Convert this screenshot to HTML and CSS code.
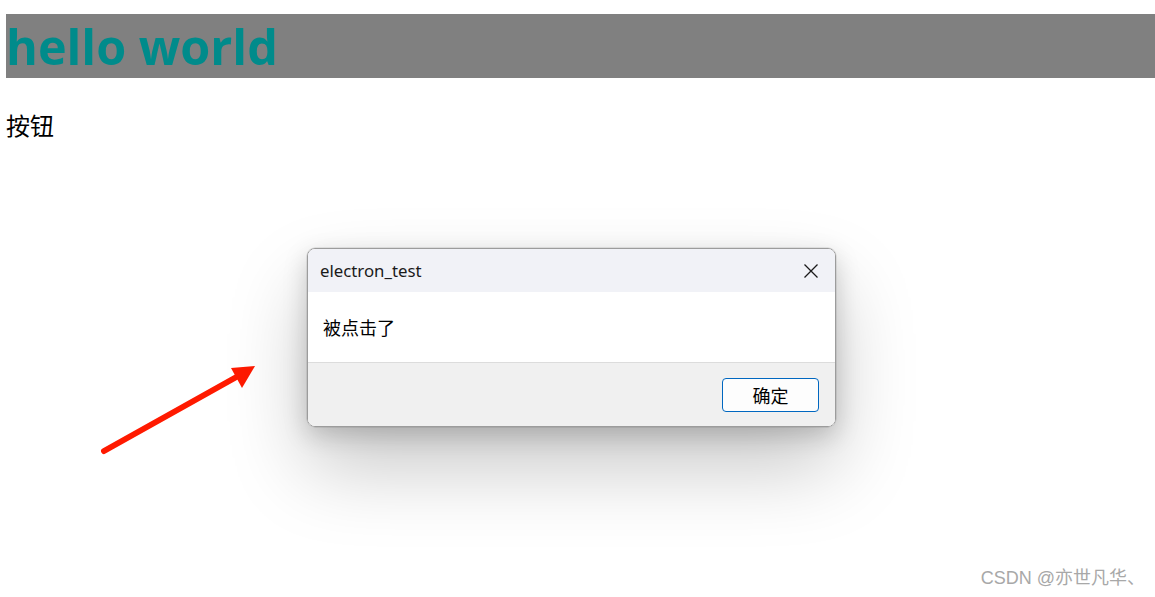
FILE: index.html
```html
<!DOCTYPE html>
<html lang="zh">
<head>
<meta charset="utf-8">
<link rel="stylesheet" href="styles.css">
</head>
<body>
<main class="page">
  <h1 class="title">hello world</h1>
  <button class="page-btn">按钮</button>
</main>

<svg class="arrow" width="170" height="100" viewBox="0 0 170 100">
  <line x1="4" y1="87" x2="140" y2="11" stroke="#ff1a00" stroke-width="6" stroke-linecap="round"/>
  <polygon points="155,2 131,4 142,24" fill="#ff1a00"/>
</svg>

<div class="dialog">
  <div class="dialog-head">
    <span class="dialog-title">electron_test</span>
    <svg class="close" width="16" height="16" viewBox="0 0 16 16">
      <path d="M1.5 1.5 L14.5 14.5 M14.5 1.5 L1.5 14.5" stroke="#1a1a1a" stroke-width="1.3" fill="none"/>
    </svg>
  </div>
  <div class="dialog-body">被点击了</div>
  <div class="dialog-foot">
    <button class="ok">确定</button>
  </div>
</div>

<div class="watermark">CSDN @亦世凡华、</div>
</body>
</html>
```

FILE: styles.css
```css
html, body {
  margin: 0;
  padding: 0;
  background: #ffffff;
  height: 100%;
  overflow: hidden;
}
body {
  font-family: "Noto Sans", "Noto Sans CJK SC", sans-serif;
  position: relative;
}
.page {
  padding: 14px 0 0 6px;
  display: flex;
  flex-direction: column;
  align-items: flex-start;
}
.title {
  margin: 0;
  align-self: stretch;
  height: 64px;
  background: #808080;
  color: #008b8b;
  font-family: "Open Sans", "Noto Sans", sans-serif;
  font-weight: 700;
  font-size: 48.5px;
  line-height: 64px;
  padding-left: 0;
}
.page-btn {
  margin-top: 33px;
  border: none;
  background: none;
  padding: 0;
  font-family: "Noto Sans CJK SC", sans-serif;
  font-size: 24px;
  line-height: 28px;
  color: #000;
}
.arrow {
  position: absolute;
  left: 100px;
  top: 364px;
}
.dialog {
  position: absolute;
  left: 307px;
  top: 248px;
  width: 527px;
  height: 177px;
  border: 1px solid #9c9c9c;
  border-radius: 8px;
  overflow: hidden;
  display: flex;
  flex-direction: column;
  box-shadow: 0 0 0 0.5px rgba(0, 0, 0, 0.15), 0 40px 80px rgba(0, 0, 0, 0.22), 0 8px 24px rgba(0, 0, 0, 0.18);
  font-family: "Noto Sans CJK SC", sans-serif;
  color: #000;
}
.dialog-head {
  height: 43px;
  background: #f1f2f7;
  display: flex;
  align-items: center;
  justify-content: space-between;
  padding: 0 16px 0 12px;
}
.dialog-title {
  font-family: "Noto Sans", "Noto Sans CJK SC", sans-serif;
  font-size: 16.8px;
  color: #1a1a1a;
}
.close {
  display: block;
}
.dialog-body {
  height: 70px;
  background: #ffffff;
  display: flex;
  align-items: center;
  padding-left: 15px;
  font-size: 18px;
  border-bottom: 1px solid #dcdcdc;
}
.dialog-foot {
  flex: 1;
  background: #f0f0f0;
  display: flex;
  align-items: center;
  justify-content: flex-end;
  padding-right: 16px;
}
.ok {
  width: 97px;
  height: 34px;
  background: #fdfdfd;
  border: 1px solid #0067c0;
  border-radius: 4px;
  font-family: "Noto Sans CJK SC", sans-serif;
  font-size: 18px;
  color: #000;
  padding: 0;
}
.watermark {
  position: absolute;
  right: 10px;
  bottom: 8px;
  font-family: "Liberation Sans", "Noto Sans CJK SC", sans-serif;
  font-size: 18px;
  color: #a8a8a8;
}
```
